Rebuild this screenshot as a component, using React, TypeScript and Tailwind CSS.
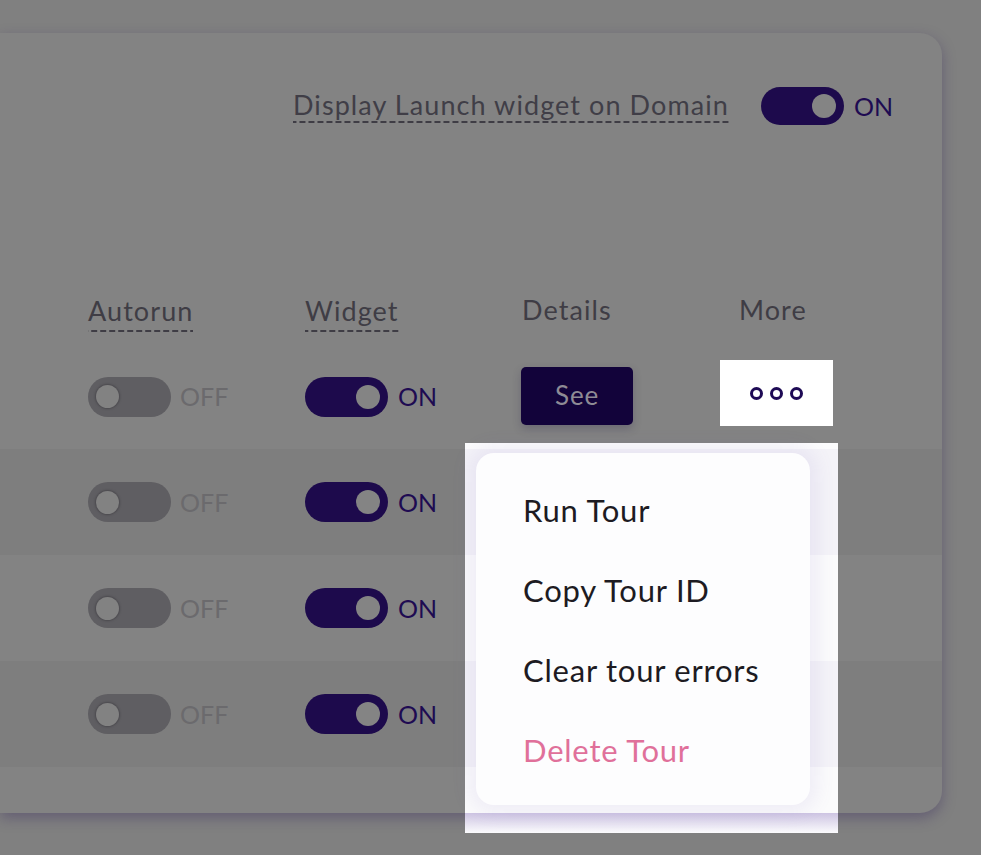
import React from "react";

const dashed =
  "pb-[5px] bg-[linear-gradient(to_right,#3f3d45_65%,transparent_0)] bg-[length:9px_2px] bg-repeat-x bg-bottom";

function Toggle({ on, small }: { on: boolean; small?: boolean }) {
  const h = small ? "h-[38px]" : "h-[40px]";
  if (on) {
    return (
      <span className="inline-flex items-center gap-[10px]">
        <span className={`flex ${h} w-[83px] items-center justify-end rounded-full bg-[#1d0a4c] pr-[8px]`}>
          <span className="h-[24px] w-[24px] rounded-full bg-[#848484]" />
        </span>
        <span className="text-[25px] leading-none text-[#1e0b52]">ON</span>
      </span>
    );
  }
  return (
    <span className="inline-flex items-center gap-[9px]">
      <span className={`flex ${h} w-[83px] items-center rounded-full bg-[#5f5e62] pl-[8px]`}>
        <span className="h-[23px] w-[23px] rounded-full bg-[#828282] shadow-[0_0_2px_1px_rgba(60,58,64,0.6)]" />
      </span>
      <span className="text-[25px] leading-none text-[#6b6a6d]">OFF</span>
    </span>
  );
}

const menuItems = [
  { label: "Run Tour", danger: false },
  { label: "Copy Tour ID", danger: false },
  { label: "Clear tour errors", danger: false },
  { label: "Delete Tour", danger: true },
];

function MoreMenu() {
  return (
    <div className="absolute left-[-255px] top-[83px] z-10 h-[390px] w-[373px] bg-white">
      {/* rows seen through the spotlight */}
      <div className="flex h-full flex-col">
        <div className="h-[6px] bg-[#fcfcfd]" />
        <div className="h-[106px] bg-[#f4f3f8]" />
        <div className="h-[106px] bg-[#fbfbfc]" />
        <div className="h-[106px] bg-[#f4f3f8]" />
        <div className="h-[46px] bg-[#fbfbfc]" />
        <div className="h-[20px] bg-[linear-gradient(to_bottom,#cdc4e2,#fbfbfd)]" />
      </div>
      <div className="absolute left-[11px] top-[10px] flex h-[352px] w-[334px] flex-col rounded-[18px] bg-[#fdfdfe] pl-[47px] pt-[17px] shadow-[0_0_18px_8px_rgba(120,100,190,0.09)]">
        {menuItems.map((m) => (
          <div
            key={m.label}
            className={`flex h-[80px] items-center text-[31px] tracking-[0.025em] ${
              m.danger ? "text-[#e0709a]" : "text-[#1d1b22]"
            }`}
          >
            {m.label}
          </div>
        ))}
      </div>
    </div>
  );
}

function MoreButton() {
  return (
    <div className="relative -ml-[19px] mb-[7px] flex h-[66px] w-[113px] items-center justify-center gap-[7px] bg-white">
      {[0, 1, 2].map((i) => (
        <span key={i} className="h-[13px] w-[13px] rounded-full border-[3px] border-[#1e0a55]" />
      ))}
      <MoreMenu />
    </div>
  );
}

export default function App() {
  const rows = [0, 1, 2, 3];
  return (
    <div className="h-[855px] w-full overflow-hidden bg-[#808080] pt-[33px] font-['Lato','Noto_Sans',sans-serif]">
      <div className="mr-[39px] h-[780px] rounded-r-[22px] bg-[#838383] shadow-[0_5px_14px_rgba(45,30,90,0.35)]">
        {/* domain setting */}
        <div className="flex items-center justify-end gap-[32px] pr-[49px] pt-[54px]">
          <span className={`mt-[2px] text-[27px] leading-none tracking-[0.04em] text-[#403e47] ${dashed}`}>
            Display Launch widget on Domain
          </span>
          <Toggle on small />
        </div>

        {/* table header */}
        <div className="mt-[151px] grid h-[68px] grid-cols-[217px_217px_217px_217px] items-center pl-[88px] text-[27px] leading-none tracking-[0.04em] text-[#3f3d45]">
          <span className="justify-self-start">
            <span className={dashed}>Autorun</span>
          </span>
          <span className="justify-self-start">
            <span className={dashed}>Widget</span>
          </span>
          <span className="pb-[1px]">Details</span>
          <span className="pb-[1px]">More</span>
        </div>

        {/* table rows */}
        {rows.map((r) => (
          <div
            key={r}
            className={`grid grid-cols-[217px_217px_217px_217px] items-center pl-[88px] ${
              r === 0 ? "h-[105px]" : "h-[106px]"
            } ${r % 2 === 1 ? "bg-[#7e7e7e]" : ""}`}
          >
            <div>
              <Toggle on={false} />
            </div>
            <div>
              <Toggle on />
            </div>
            <div>
              {r === 0 && (
                <button className="-ml-px mb-[2px] h-[58px] w-[112px] rounded-[5px] bg-[#12033a] text-[26px] tracking-[0.03em] text-[#8e8b95] shadow-[0_4px_8px_rgba(40,30,70,0.25)]">
                  See
                </button>
              )}
            </div>
            <div>{r === 0 && <MoreButton />}</div>
          </div>
        ))}
      </div>
    </div>
  );
}
